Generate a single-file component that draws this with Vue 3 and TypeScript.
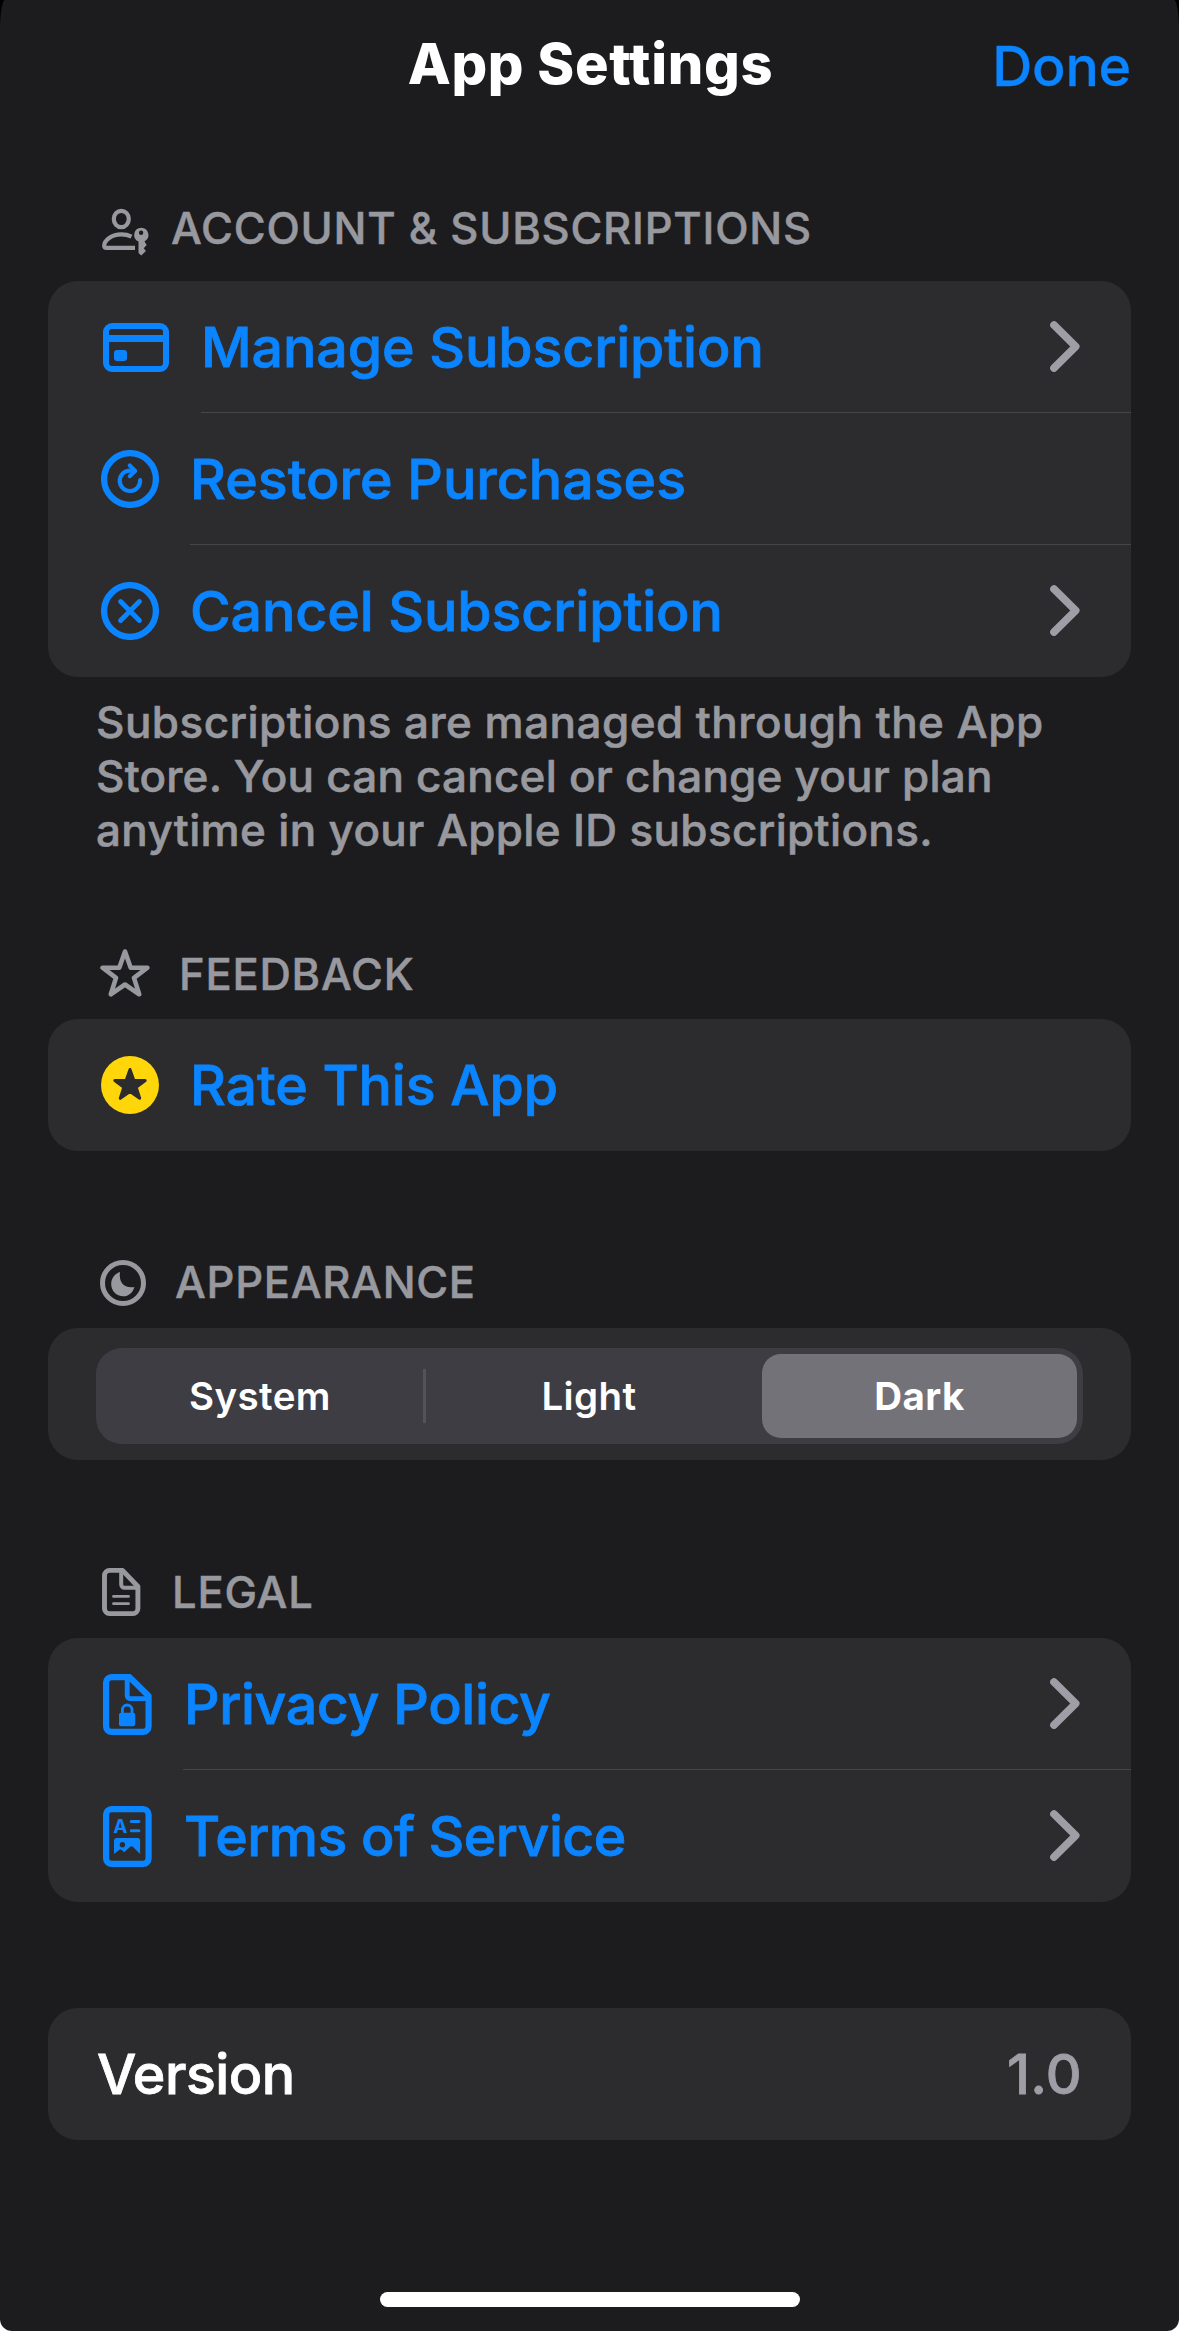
<script setup lang="ts">
import { ref } from 'vue'

type Theme = 'System' | 'Light' | 'Dark'

const themes: Theme[] = ['System', 'Light', 'Dark']
const theme = ref<Theme>('Dark')
const version = '1.0'
</script>

<template>
  <div class="backdrop">
    <main class="sheet">
      <header class="nav">
        <h1 class="title">App Settings</h1>
        <button class="done" type="button">Done</button>
      </header>

      <section class="section account">
        <h2 class="heading">
          <svg class="heading-icon" width="52" height="60" viewBox="0 -8 52 60" fill="none" stroke="currentColor" stroke-width="4.2">
            <ellipse cx="21.3" cy="13" rx="7.5" ry="8.2" />
            <path d="M31.5 30.6C28.5 29.1 25 28.4 21.3 28.4C11.8 28.4 4.2 34 4.2 39.8C4.2 41.2 5 41.9 6.6 41.9H35" />
            <path fill="currentColor" stroke="none" fill-rule="evenodd" d="M41.3 21.8a7.2 7.2 0 0 1 3.2 13.6l2.2 3.7-3 3.1 2.2 2.8-4.6 4.4-2.8-2.4V35.6A7.2 7.2 0 0 1 41.3 21.8Zm-.2 2.7a2.2 2.2 0 1 0 0 4.4a2.2 2.2 0 0 0 0-4.4Z" />
          </svg>
          <span class="t-account">ACCOUNT &amp; SUBSCRIPTIONS</span>
        </h2>
        <div class="card">
          <div class="row manage">
            <svg class="row-icon" width="66" height="49" viewBox="0 0 66 49">
              <rect x="3" y="3" width="60" height="43" rx="6" fill="none" stroke="currentColor" stroke-width="6" />
              <rect x="3" y="12" width="60" height="7" fill="currentColor" />
              <rect x="11" y="27" width="13" height="11" rx="3" fill="currentColor" />
            </svg>
            <div class="row-body">
              <span class="label t-manage">Manage Subscription</span>
              <svg class="chevron" width="30" height="51" viewBox="0 0 30 51"><path d="M4 4L25.7 25.5L4 47" /></svg>
            </div>
          </div>
          <div class="row round">
            <svg class="row-icon" width="58" height="58" viewBox="0 0 58 58" fill="none" stroke="currentColor" stroke-linecap="round" stroke-linejoin="round">
              <circle cx="29" cy="29" r="25.9" stroke-width="6.3" />
              <path d="M39.1 30A10.2 10.2 0 1 1 29 20.6H33" stroke-width="4.2" />
              <path d="M28.7 15.4L34.2 21L28.7 26.2" stroke-width="4" />
            </svg>
            <div class="row-body">
              <span class="label t-restore">Restore Purchases</span>
            </div>
          </div>
          <div class="row round">
            <svg class="row-icon" width="58" height="58" viewBox="0 0 58 58" fill="none" stroke="currentColor" stroke-linecap="round">
              <circle cx="29" cy="29" r="25.9" stroke-width="6.3" />
              <path d="M19.6 19.6L38.4 38.4M38.4 19.6L19.6 38.4" stroke-width="5" />
            </svg>
            <div class="row-body">
              <span class="label t-cancel">Cancel Subscription</span>
              <svg class="chevron" width="30" height="51" viewBox="0 0 30 51"><path d="M4 4L25.7 25.5L4 47" /></svg>
            </div>
          </div>
        </div>
        <p class="note">
          <span class="n-first">Subscriptions are managed through the App</span><br />
          <span class="n-second">Store. You can cancel or change your plan</span><br />
          <span>anytime in your Apple ID subscriptions.</span>
        </p>
      </section>

      <section class="section feedback">
        <h2 class="heading">
          <svg class="heading-icon" width="50" height="60" viewBox="0 -4.5 50 60" fill="none" stroke="currentColor" stroke-width="4.6" stroke-linejoin="round">
            <path d="M25 3L30.6 19.1L47.4 19.2L34 29.4L39.2 45.8L25 36L10.8 45.8L16 29.4L2.6 19.2L19.4 19.1Z" />
          </svg>
          <span class="t-feedback">FEEDBACK</span>
        </h2>
        <div class="card">
          <div class="row round">
            <svg class="row-icon" width="58" height="58" viewBox="0 0 58 58">
              <circle cx="29" cy="29" r="29" fill="#ffd60a" />
              <path d="M29 13.5L32.9 24.4L44.2 24.5L35.2 31.3L38.7 42.3L29 35.6L19.3 42.3L22.8 31.3L13.8 24.5L25.1 24.4Z" fill="#2c2c2e" stroke="#2c2c2e" stroke-width="3" stroke-linejoin="round" />
            </svg>
            <div class="row-body">
              <span class="label t-rate">Rate This App</span>
            </div>
          </div>
        </div>
      </section>

      <section class="section appearance">
        <h2 class="heading">
          <svg class="heading-icon" width="46" height="60" viewBox="0 -8 46 60">
            <circle cx="23" cy="23" r="20.5" fill="none" stroke="currentColor" stroke-width="5" />
            <path d="M20 11.9C14.8 13.6 11.2 18.4 11.2 24C11.2 31 16.4 36.2 23.3 36.2C28.6 36.2 33 32.6 34.4 26.9C24.5 28.5 18.4 22.5 20 11.9Z" fill="currentColor" />
          </svg>
          <span class="t-appearance">APPEARANCE</span>
        </h2>
        <div class="card picker">
          <div class="segments">
            <button
              v-for="name in themes"
              :key="name"
              type="button"
              class="segment"
              :class="{ selected: theme === name }"
              @click="theme = name"
            >
              {{ name }}
            </button>
          </div>
        </div>
      </section>

      <section class="section legal">
        <h2 class="heading">
          <svg class="heading-icon" width="39" height="60" viewBox="0 -6 39 60" fill="none" stroke="currentColor" stroke-linejoin="round">
            <path d="M7.5 2.4H20.5L35.9 18.5V40.6a5 5 0 0 1-5 5H7.5a5 5 0 0 1-5-5V7.4a5 5 0 0 1 5-5Z" stroke-width="4.9" />
            <path d="M19.2 4V16.5a3.2 3.2 0 0 0 3.2 3.2H35" stroke-width="4" />
            <path d="M11.5 28.4H26.5M11.5 35.7H26.5" stroke-width="2.8" stroke-linecap="round" />
          </svg>
          <span class="t-legal">LEGAL</span>
        </h2>
        <div class="card">
          <div class="row doc">
            <svg class="row-icon" width="49" height="61" viewBox="0 0 49 61" fill="none" stroke="currentColor" stroke-linejoin="round">
              <path d="M8.6 3.1H26.5L45.6 22V52.4a5.5 5.5 0 0 1-5.5 5.5H8.6a5.5 5.5 0 0 1-5.5-5.5V8.6a5.5 5.5 0 0 1 5.5-5.5Z" stroke-width="6.2" />
              <path d="M24.2 4V21.4a3.2 3.2 0 0 0 3.2 3.2H45" stroke-width="4.9" />
              <path d="M19.4 40V35.8a4.8 4.8 0 0 1 9.6 0V40" stroke-width="2.8" />
              <rect x="16" y="38.7" width="16.2" height="13.5" rx="2" fill="currentColor" stroke="none" />
            </svg>
            <div class="row-body">
              <span class="label t-privacy">Privacy Policy</span>
              <svg class="chevron" width="30" height="51" viewBox="0 0 30 51"><path d="M4 4L25.7 25.5L4 47" /></svg>
            </div>
          </div>
          <div class="row doc">
            <svg class="row-icon" width="49" height="61" viewBox="0 0 49 61">
              <rect x="3.1" y="3.1" width="42.5" height="54.8" rx="5.5" fill="none" stroke="currentColor" stroke-width="6.2" />
              <text class="glyph" x="10.2" y="27">A</text>
              <path d="M28.3 15.6H35.9M28.3 24.7H35.9" stroke="currentColor" stroke-width="3" stroke-linecap="round" />
              <path fill="currentColor" fill-rule="evenodd" d="M13.5 32H34.5a2.6 2.6 0 0 1 2.6 2.6V48L29.8 40.8a2 2 0 0 0-2.7 0L21.2 46.2L18.7 44a2 2 0 0 0-2.6 0L11 48V34.6A2.6 2.6 0 0 1 13.5 32ZM19.4 36.1a2.7 2.7 0 1 0 0 5.4a2.7 2.7 0 0 0 0-5.4Z" />
            </svg>
            <div class="row-body">
              <span class="label t-terms">Terms of Service</span>
              <svg class="chevron" width="30" height="51" viewBox="0 0 30 51"><path d="M4 4L25.7 25.5L4 47" /></svg>
            </div>
          </div>
        </div>
      </section>

      <section class="card about">
        <span class="label t-version">Version</span>
        <span class="label number">{{ version }}</span>
      </section>

      <div class="home-indicator"></div>
    </main>
  </div>
</template>

<style>
body {
  margin: 0;
  background: #fff;
}
</style>

<style scoped>
.backdrop {
  width: 1179px;
  height: 2331px;
  background: linear-gradient(#000 0 50%, #fff 50% 100%);
}
.sheet {
  box-sizing: border-box;
  display: flex;
  flex-direction: column;
  width: 100%;
  height: 100%;
  padding: 0 48px 24px;
  overflow: hidden;
  border-radius: 5px 5px 12px 12px / 30px 30px 12px 12px;
  background: #1c1c1e;
  color: #fff;
  font-family: Inter, "Liberation Sans", sans-serif;
  font-size: 55.5px;
  font-weight: 500;
  white-space: nowrap;
}
button {
  padding: 0;
  border: 0;
  background: none;
  color: inherit;
  font: inherit;
}
.nav {
  display: grid;
  grid-template-columns: 1fr auto 1fr;
  align-items: center;
  height: 128px;
}
.title {
  grid-column: 2;
  margin: 0 0 0 2px;
  font-size: 56px;
  font-weight: 800;
  letter-spacing: 0.7px;
}
.done {
  justify-self: end;
  padding-top: 3px;
  color: #0a84ff;
  letter-spacing: -0.2px;
  -webkit-text-stroke: 0.3px currentColor;
}
.section {
  display: flex;
  flex-direction: column;
}
.heading {
  display: flex;
  align-items: center;
  height: 60px;
  margin: 0;
  padding-left: 52px;
  color: #98989f;
  font-size: 43.5px;
  font-weight: 500;
  letter-spacing: 0.78px;
  -webkit-text-stroke: 0.5px currentColor;
}
.heading-icon {
  flex: none;
}
.card {
  overflow: hidden;
  border-radius: 30px;
  background: #2c2c2e;
}
.row {
  display: flex;
  align-items: center;
  height: 132px;
  color: #0a84ff;
}
.row-icon {
  flex: none;
}
.row-body {
  box-sizing: border-box;
  display: flex;
  flex: 1;
  align-items: center;
  justify-content: space-between;
  height: 132px;
  padding-right: 51px;
  border-bottom: 1px solid transparent;
}
.row:not(:last-child) .row-body {
  border-bottom-color: #464649;
}
.label {
  padding-bottom: 1px;
  letter-spacing: -0.1px;
  -webkit-text-stroke: 0.8px currentColor;
}
.t-restore {
  letter-spacing: 0;
}
.t-privacy {
  padding-left: 1px;
  letter-spacing: -0.4px;
}
.t-terms {
  padding-left: 1px;
  letter-spacing: -0.6px;
}
.t-version {
  letter-spacing: -0.5px;
}
.chevron {
  flex: none;
  fill: none;
  stroke: #9f9ea6;
  stroke-width: 7.6;
  stroke-linecap: round;
  stroke-linejoin: round;
}
.manage .row-icon {
  margin: 0 32px 0 55px;
}
.round .row-icon {
  margin: 0 31px 0 53px;
}
.doc .row-icon {
  margin: 0 31px 0 55px;
}
.glyph {
  fill: currentColor;
  font-size: 19px;
  font-weight: 700;
}
.account {
  padding-top: 70px;
}
.account .heading {
  gap: 19px;
  margin-bottom: 23px;
}
.note {
  margin: 18px 0 0 48px;
  color: #98989f;
  font-size: 44px;
  line-height: 54px;
  letter-spacing: 0.35px;
  -webkit-text-stroke: 0.6px currentColor;
}
.n-first {
  letter-spacing: 0.46px;
}
.n-second {
  letter-spacing: 0.22px;
}
.feedback {
  padding-top: 87px;
}
.feedback .heading {
  gap: 29px;
  margin-bottom: 15px;
}
.appearance {
  padding-top: 101px;
}
.appearance .heading {
  gap: 29px;
  margin-bottom: 16px;
  letter-spacing: 0.7px;
}
.picker {
  padding: 20px 48px 16px;
}
.segments {
  display: grid;
  grid-template-columns: 330px 328px 323px;
  height: 84px;
  padding: 6px 6px 6px 0;
  border-radius: 26px;
  background: #3e3d43;
  font-size: 38.5px;
  font-weight: 600;
}
.segment {
  padding-right: 2px;
  border-radius: 19px;
  letter-spacing: 0.4px;
}
.segment:last-child {
  margin-left: 8px;
  padding-right: 0;
}
.segment:first-child {
  background: linear-gradient(#545359, #545359) right center / 3px 54px no-repeat;
  border-radius: 0;
}
.segment.selected {
  background: #737278;
  font-weight: 700;
}
.legal {
  padding-top: 102px;
}
.legal .heading {
  gap: 31px;
  margin-bottom: 16px;
  padding-left: 54px;
}
.about {
  display: flex;
  align-items: center;
  justify-content: space-between;
  height: 132px;
  margin-top: 106px;
  padding: 0 49px;
}
.number {
  color: #9f9ea6;
  letter-spacing: 0.3px;
}
.home-indicator {
  align-self: center;
  width: 420px;
  height: 15px;
  margin-top: auto;
  border-radius: 7.5px;
  background: #fff;
}
</style>
